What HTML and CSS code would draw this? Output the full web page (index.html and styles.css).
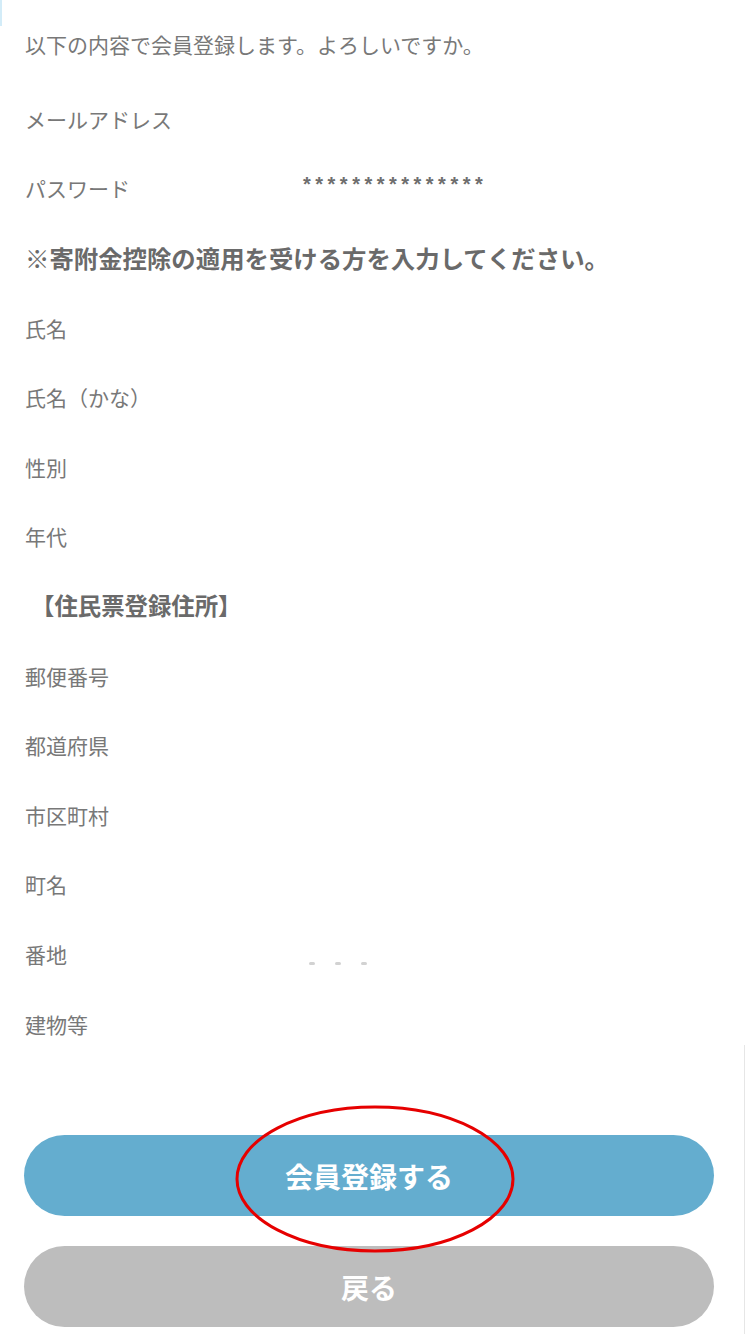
FILE: index.html
```html
<!DOCTYPE html>
<html lang="ja">
<head>
<meta charset="utf-8">
<title>会員登録確認</title>
<link rel="stylesheet" href="styles.css">
</head>
<body>
<div class="edge-left"></div>
<div class="edge-right"></div>
<main class="page">
  <p class="intro">以下の内容で会員登録します。よろしいですか。</p>
  <dl class="rows">
    <div class="row"><dt>メールアドレス</dt><dd></dd></div>
    <div class="row"><dt>パスワード</dt><dd class="mask">***************</dd></div>
    <div class="row heading">※寄附金控除の適用を受ける方を入力してください。</div>
    <div class="row"><dt>氏名</dt><dd></dd></div>
    <div class="row"><dt>氏名（かな）</dt><dd></dd></div>
    <div class="row"><dt>性別</dt><dd></dd></div>
    <div class="row"><dt>年代</dt><dd></dd></div>
    <div class="row section">【住民票登録住所】</div>
    <div class="row"><dt>郵便番号</dt><dd></dd></div>
    <div class="row"><dt>都道府県</dt><dd></dd></div>
    <div class="row"><dt>市区町村</dt><dd></dd></div>
    <div class="row"><dt>町名</dt><dd></dd></div>
    <div class="row"><dt>番地</dt><dd class="dots"><span></span><span></span><span></span></dd></div>
    <div class="row"><dt>建物等</dt><dd></dd></div>
  </dl>
  <div class="actions">
    <div class="primary-wrap">
      <button class="btn btn-primary" type="button">会員登録する</button>
      <svg class="mark" viewBox="0 0 282 150" width="282" height="150" aria-hidden="true">
        <ellipse cx="141" cy="75" rx="138" ry="72" fill="none" stroke="#e60000" stroke-width="3"/>
      </svg>
    </div>
    <button class="btn btn-back" type="button">戻る</button>
  </div>
</main>
</body>
</html>
```

FILE: styles.css
```css
html, body {
  margin: 0;
  padding: 0;
  background: #ffffff;
}

body {
  font-family: "Noto Sans CJK JP", "Noto Sans", sans-serif;
  color: #787878;
  width: 750px;
  height: 1334px;
  overflow: hidden;
  position: relative;
}

.edge-left {
  position: absolute;
  left: 0;
  top: 0;
  width: 2px;
  height: 26px;
  background: #d3ecf8;
}

.edge-right {
  position: absolute;
  left: 744px;
  top: 1045px;
  width: 1px;
  height: 289px;
  background: #e6e6e6;
}

.page {
  padding: 9px 0 0 25px;
}

.intro {
  margin: 0;
  height: 75px;
  line-height: 70px;
  font-size: 21px;
}

.rows {
  margin: 0;
}

.row {
  display: grid;
  grid-template-columns: 278px 1fr;
  align-items: center;
  height: 69.6px;
  font-size: 21px;
}

.row dt,
.row dd {
  margin: 0;
}

.mask {
  letter-spacing: 4.5px;
  color: #6e6e6e;
  font-family: "Liberation Sans", sans-serif;
  font-weight: bold;
  font-size: 20px;
  margin-top: -8px !important;
}

.heading,
.section {
  display: block;
  line-height: 69.6px;
  font-weight: bold;
  color: #6a6a6a;
}

.heading {
  font-size: 24.4px;
}

.section {
  font-size: 23.4px;
  margin-left: 6px;
}

.dots {
  display: flex;
  gap: 20px;
  padding-left: 6px;
  padding-top: 20px;
}

.dots span {
  width: 6px;
  height: 3px;
  border-radius: 2px;
  background: #d2d2d2;
}

.actions {
  margin-top: 77px;
  width: 690px;
  margin-left: -1px;
  display: flex;
  flex-direction: column;
  gap: 30px;
}

.primary-wrap {
  position: relative;
}

.btn {
  display: block;
  width: 100%;
  height: 81px;
  border: none;
  border-radius: 41px;
  color: #ffffff;
  font-family: "Noto Sans CJK JP", "Noto Sans", sans-serif;
  font-size: 28px;
  font-weight: bold;
  padding: 0;
}

.btn-primary {
  background: #64adcf;
}

.btn-back {
  background: #bdbdbd;
}

.mark {
  position: absolute;
  left: 210px;
  top: -31px;
  pointer-events: none;
}
```
